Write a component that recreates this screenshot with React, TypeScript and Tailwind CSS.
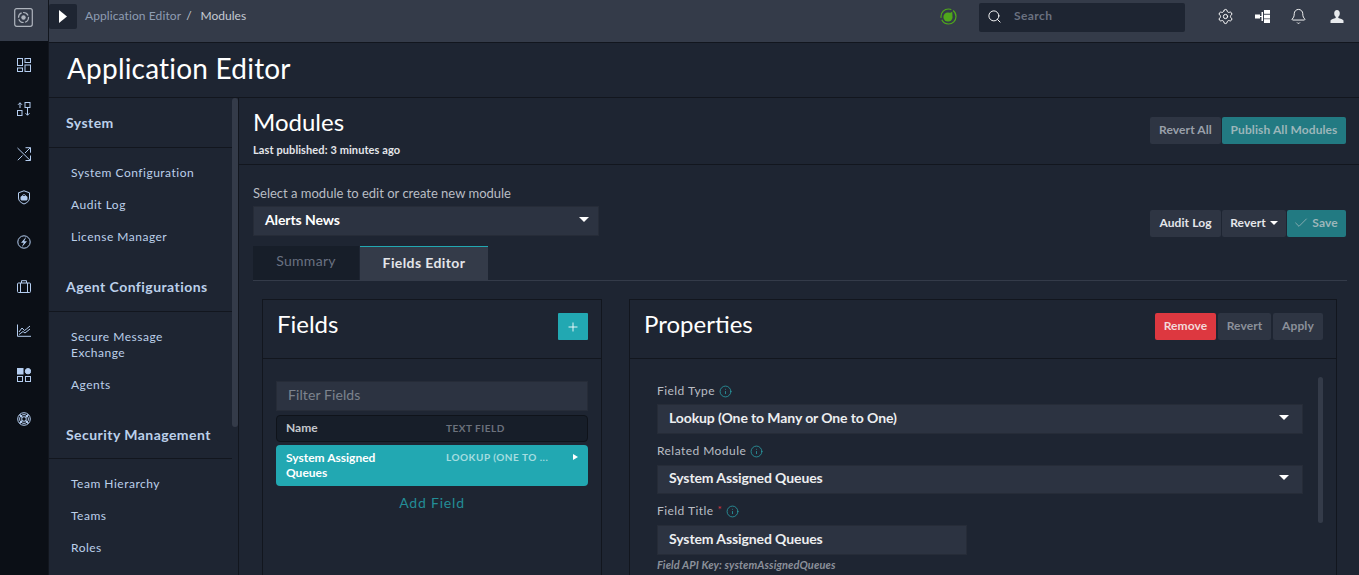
import React from 'react';
import { Settings, Bell, Search, Plus, Check, Info } from 'lucide-react';

const railStroke = '#b4cdf0';

const DashIcon = () => (
  <svg width="14" height="14" viewBox="0 0 14 14" fill="none" stroke={railStroke} strokeWidth="1">
    <rect x="0.5" y="0.5" width="5" height="7" />
    <rect x="8" y="0.5" width="5.5" height="4" />
    <rect x="0.5" y="10" width="5" height="3.5" />
    <rect x="8" y="7" width="5.5" height="6.5" />
  </svg>
);

const QueueIcon = () => (
  <svg width="14" height="14" viewBox="0 0 14 14" fill="none" stroke={railStroke} strokeWidth="1">
    <path d="M3 6V0.8M1 2.8l2-2 2 2" />
    <rect x="0.5" y="8.5" width="4.5" height="5" />
    <rect x="8" y="0.5" width="5" height="5" />
    <path d="M10.5 6v7.2M8.500 11.200l2 2 2-2" />
  </svg>
);

const ShuffleIcon = () => (
  <svg width="14" height="14" viewBox="0 0 14 14" fill="none" stroke={railStroke} strokeWidth="1">
    <path d="M0.500 1l12.800 12.500M0.800 13.200L5.500 8.500M8 6l5.300-5.300" />
    <path d="M8.500 0.700h5v5M8.500 13.500h5v-5" />
  </svg>
);

const ShieldIcon = () => (
  <svg width="14" height="15" viewBox="0 0 14 15" fill="none" stroke={railStroke} strokeWidth="1">
    <path d="M7 0.800l5.500 2v5.200c0 3-2.500 4.800-5.500 6-3-1.200-5.500-3-5.500-6V2.800z" />
    <rect x="4" y="6.500" width="6" height="3.500" rx="0.500" fill={railStroke} />
    <path d="M5.200 6.500c0-2.400 3.600-2.400 3.600 0" />
  </svg>
);

const BoltIcon = () => (
  <svg width="14" height="14" viewBox="0 0 14 14" fill="none" stroke={railStroke} strokeWidth="1">
    <circle cx="7" cy="7" r="6.200" />
    <path d="M9.500 1.500L4 7.800h2.800L4.500 12.500l5.500-6.300H7.200z" fill={railStroke} stroke="none" />
  </svg>
);

const CaseIcon = () => (
  <svg width="14" height="13" viewBox="0 0 14 13" fill="none" stroke={railStroke} strokeWidth="1">
    <rect x="0.500" y="3" width="13" height="9.500" rx="1" />
    <path d="M4.500 3V0.700h5V3M3.500 3v9.500M10.500 3v9.500" />
  </svg>
);

const ChartIcon = () => (
  <svg width="14" height="13" viewBox="0 0 14 13" fill="none" stroke={railStroke} strokeWidth="1">
    <path d="M0.500 0.500v11.800h13.500" />
    <path d="M2 8l3-4 2.500 2.500 2-1.500L13 2" />
    <path d="M2 10.500l4-3 2 1.500 5-4" />
  </svg>
);

const AppsIcon = () => (
  <svg width="14" height="14" viewBox="0 0 14 14" fill="none" stroke={railStroke} strokeWidth="1">
    <rect x="0.500" y="0.500" width="5.500" height="5.500" fill={railStroke} />
    <circle cx="11" cy="3.200" r="2.700" fill={railStroke} />
    <rect x="0.500" y="8.500" width="5" height="5" />
    <rect x="8.500" y="8.500" width="5" height="5" />
  </svg>
);

const BuoyIcon = () => (
  <svg width="14" height="14" viewBox="0 0 14 14" fill="none" stroke={railStroke} strokeWidth="1">
    <circle cx="7" cy="7" r="6.300" />
    <circle cx="7" cy="7" r="4.400" />
    <circle cx="7" cy="7" r="2.300" />
    <path d="M2.600 2.600l2.800 2.800M11.400 2.600L8.600 5.400M2.600 11.400l2.800-2.800M11.400 11.400L8.600 8.600" strokeWidth="1.400" />
  </svg>
);

const LogoIcon = () => (
  <svg width="19" height="19" viewBox="0 0 19 19" fill="none" stroke="#aeb4bd">
    <rect x="0.700" y="0.700" width="17.600" height="17.600" rx="2" strokeWidth="1.200" />
    <circle cx="9.500" cy="9.500" r="5" strokeWidth="1.200" strokeDasharray="6 1.500" />
    <circle cx="9.500" cy="9.500" r="2.200" fill="#aeb4bd" stroke="none" />
  </svg>
);

const StatusIcon = () => (
  <svg width="17" height="17" viewBox="0 0 17 17" fill="none">
    <circle cx="8.500" cy="8.500" r="7.500" stroke="#4fa81b" strokeWidth="1.200" strokeDasharray="20 2 16 2" />
    <circle cx="8" cy="9" r="4.600" fill="#4fa81b" />
    <path d="M9 5.500l3.200-1.700L12.500 7.500z" fill="#4fa81b" />
  </svg>
);

const HierarchyIcon = () => (
  <svg width="15" height="13" viewBox="0 0 15 13">
    <rect x="0" y="4.500" width="5" height="4" fill="#fff" />
    <rect x="5" y="6" width="2" height="1" fill="#fff" />
    <rect x="6.500" y="2" width="1.500" height="9" fill="#fff" />
    <rect x="9" y="0" width="6" height="3.800" fill="#fff" />
    <rect x="9" y="4.700" width="6" height="3.800" fill="#fff" />
    <rect x="9" y="9.200" width="6" height="3.800" fill="#fff" />
  </svg>
);

const UserIcon = () => (
  <svg width="14" height="13" viewBox="0 0 13 13" fill="#e8eaed">
    <path d="M6.500 0C8.300 0 9.300 1.300 9.300 3.200c0 1.600-.7 3-1.500 3.600v1.100c1.800.6 4.700 1.200 5.200 2.600V13H0v-2.500c.5-1.400 3.400-2 5.200-2.600V6.800C4.400 6.200 3.700 4.800 3.700 3.200 3.700 1.300 4.700 0 6.500 0z" />
  </svg>
);

const Caret = () => (
  <span className="w-0 h-0 border-l-[5px] border-r-[5px] border-t-[5px] border-l-transparent border-r-transparent border-t-white" />
);

const InfoDot = () => <Info className="w-[13px] h-[13px] text-[#2aa5ad] ml-[4px]" strokeWidth={1.4} />;

const railIcons = [
  <DashIcon />,
  <QueueIcon />,
  <ShuffleIcon />,
  <ShieldIcon />,
  <BoltIcon />,
  <CaseIcon />,
  <ChartIcon />,
  <AppsIcon />,
  <BuoyIcon />,
];

const sideGroups = [
  { title: 'System', h: 'h-[50px] pt-[14px]', list: 'pt-[9px] pb-[10px]', items: ['System Configuration', 'Audit Log', 'License Manager'] },
  { title: 'Agent Configurations', h: 'h-[49px] pt-[13px]', list: 'pt-[9px] pb-[11px]', items: ['Secure Message Exchange', 'Agents'] },
  { title: 'Security Management', h: 'h-[47px] pt-[12px]', list: 'pt-[9px]', items: ['Team Hierarchy', 'Teams', 'Roles'] },
];

const GrayBtn: React.FC<{ className?: string; children: React.ReactNode }> = ({ className, children }) => (
  <button className={`h-[27px] pb-[2px] bg-[#2e3543] rounded-[2px] text-[12px] tracking-[0.1px] font-bold flex items-center justify-center ${className ?? ''}`}>
    {children}
  </button>
);

export default function App() {
  return (
    <div className="w-[1359px] h-[575px] overflow-hidden flex bg-[#1e2532] text-white font-['Lato','Noto_Sans',sans-serif]">
      {/* left rail */}
      <div className="w-[49px] shrink-0 flex flex-col border-r border-[#12161e] bg-[#0b0f16] pr-[1px]">
        <div className="h-[41px] shrink-0 -mr-[1px] bg-[#343b49] flex justify-center pt-[8px] pr-[1px]">
          <LogoIcon />
        </div>
        <div className="pt-[2px]">
          {railIcons.map((icon, i) => (
            <div key={i} className="h-[44.25px] flex items-center justify-center">
              {icon}
            </div>
          ))}
        </div>
      </div>

      <div className="flex-1 min-w-0 flex flex-col">
        {/* top bar */}
        <div className="h-[43px] shrink-0 bg-[#343b49] border-b border-[#12161e] flex items-start">
          <div className="w-[28px] h-[25px] mt-[4px] bg-[#1e2532] rounded-[2px] flex items-center justify-center">
            <svg width="8" height="13" viewBox="0 0 8 13" fill="#fff"><path d="M0 0l8 6.500L0 13z" /></svg>
          </div>
          <div className="ml-[8px] mt-[7px] text-[12px] tracking-[0.1px] text-[#8f9db3]">Application Editor</div>
          <div className="ml-[5px] mt-[7px] text-[12px] text-[#c5cad2]">/</div>
          <div className="ml-[9px] mt-[7px] text-[12px] text-[#c5cad2]">Modules</div>
          <div className="ml-auto h-[35px] flex items-center">
            <div className="pb-[3px] flex"><StatusIcon /></div>
            <div className="ml-[22px] w-[206px] h-[29px] bg-[#1e2532] rounded-[2px] flex items-center pl-[8px] pb-[3px]">
              <Search className="w-[15px] h-[15px] text-white" strokeWidth={1.5} />
              <span className="ml-[12px] text-[12px] tracking-[0.4px] text-[#6a7180] font-bold">Search</span>
            </div>
            <div className="ml-[32px] pb-[3px] flex"><Settings className="w-[17px] h-[17px] text-white" strokeWidth={1.4} /></div>
            <div className="ml-[21px] pb-[3px] flex"><HierarchyIcon /></div>
            <div className="ml-[20px] pb-[3px] flex"><Bell className="w-[17px] h-[17px] text-white" strokeWidth={1.3} /></div>
            <div className="ml-[23px] mr-[15px] pb-[3px] flex"><UserIcon /></div>
          </div>
        </div>

        {/* page title */}
        <div className="h-[55px] shrink-0 border-b border-[#12161e] pl-[18px] pb-[4px] flex items-center">
          <h1 className="text-[28px] leading-none tracking-[0.2px] font-normal">Application Editor</h1>
        </div>

        <div className="flex-1 min-h-0 flex">
          {/* sidebar */}
          <div className="w-[183px] shrink-0 overflow-hidden">
            {sideGroups.map((g) => (
              <div key={g.title}>
                <div className={`${g.h} pl-[17px] border-b border-[#12161e] text-[14px] font-bold tracking-[0.45px] text-[#bcd0ea] leading-[22px]`}>
                  {g.title}
                </div>
                <div className={g.list}>
                  {g.items.map((item) => (
                    <div key={item} className="pl-[22px] pr-[30px] py-[8px] text-[12px] leading-[16px] tracking-[0.5px] text-[#bcd0ea]">
                      {item}
                    </div>
                  ))}
                </div>
              </div>
            ))}
          </div>
          <div className="w-[7px] shrink-0 border-r border-[#12161e]">
            <div className="w-[6px] h-[329px] bg-[#343b49] rounded-[3px]" />
          </div>

          {/* main */}
          <div className="flex-1 min-w-0 overflow-hidden">
            <div className="h-[67px] border-b border-[#12161e] pl-[14px] pr-[13px] flex justify-between">
              <div>
                <div className="text-[24px] leading-[30px] mt-[9px] font-normal">Modules</div>
                <div className="text-[11px] leading-[14px] mt-[6px] tracking-[0.1px] font-bold text-[#e4e6ea]">Last published: 3 minutes ago</div>
              </div>
              <div className="flex mt-[19px] gap-[1px]">
                <GrayBtn className="w-[71px] text-[#9aa0aa]">Revert All</GrayBtn>
                <GrayBtn className="w-[124px] !bg-[#227a82] text-[#9cb6ba]">Publish All Modules</GrayBtn>
              </div>
            </div>

            <div className="pl-[14px] pr-[13px] flex justify-between">
              <div>
                <div className="text-[13px] leading-[16px] mt-[20px] text-[#b9bdc4]">Select a module to edit or create new module</div>
                <div className="w-[346px] h-[30px] mt-[5px] pb-[4px] bg-[#2c3341] border border-[#262c38] flex items-center justify-between pl-[11px] pr-[9px] text-[14px] tracking-[-0.1px] font-bold">
                  Alerts News
                  <Caret />
                </div>
              </div>
              <div className="flex mt-[45px] gap-[1px]">
                <GrayBtn className="w-[71px] text-[#e4e6ea]">Audit Log</GrayBtn>
                <GrayBtn className="w-[64px] text-[#e4e6ea]">
                  Revert
                  <span className="ml-[4px] w-0 h-0 border-l-[4px] border-r-[4px] border-t-[4px] border-l-transparent border-r-transparent border-t-white" />
                </GrayBtn>
                <GrayBtn className="w-[59px] pr-[2px] !bg-[#227a82] text-[#9cb6ba]">
                  <Check className="w-[16px] h-[16px] mr-[3px]" strokeWidth={1.2} />
                  Save
                </GrayBtn>
              </div>
            </div>

            {/* tabs */}
            <div className="ml-[14px] mr-[12px] mt-[9px] h-[35px] border-b border-[#343b49] flex">
              <div className="w-[106px] h-[34px] pb-[6px] bg-[#171e29] text-[14px] tracking-[0.3px] text-[#697181] flex items-center justify-center">Summary</div>
              <div className="ml-[1px] w-[128px] h-[34px] pb-[2px] bg-[#343b49] border-t border-[#22a8b2] text-[14px] tracking-[0.4px] font-bold text-[#e4e6ea] flex items-center justify-center">Fields Editor</div>
            </div>

            {/* panels */}
            <div className="mt-[18px] ml-[23px] flex gap-[27px]">
              <div className="w-[340px] h-[300px] shrink-0 border border-[#12161e]">
                <div className="h-[59px] border-b border-[#12161e] pl-[14px] pr-[13px] flex justify-between">
                  <div className="text-[24px] leading-[30px] mt-[9px]">Fields</div>
                  <div className="mt-[13px] w-[30px] h-[27px] bg-[#22a8b2] rounded-[1px] flex items-center justify-center">
                    <Plus className="w-[14px] h-[14px] text-white" strokeWidth={1.5} />
                  </div>
                </div>
                <div className="px-[13px] pt-[22px]">
                  <div className="h-[30px] pb-[3px] bg-[#2c3341] border border-[#262c38] pl-[11px] text-[14px] tracking-[0.1px] text-[#7d838e] flex items-center">Filter Fields</div>
                  <div className="mt-[4px] h-[27px] bg-[#171e29] border border-[#0f131a] rounded-[4px] flex items-center pl-[9px]">
                    <span className="w-[160px] text-[12px] font-bold text-[#c4c7cc] -mt-[2px]">Name</span>
                    <span className="text-[10px] font-bold tracking-[0.5px] text-[#6c727d]">TEXT FIELD</span>
                  </div>
                  <div className="mt-[3px] h-[41px] bg-[#22a8b2] rounded-[4px] flex pl-[10px] pt-[5px]">
                    <span className="w-[160px] pr-[30px] text-[12px] leading-[15px] font-bold text-white">System Assigned Queues</span>
                    <span className="w-[127px] text-[10px] leading-[15px] font-bold tracking-[0.5px] text-[#a5dde0]">LOOKUP (ONE TO ...</span>
                    <span className="mt-[4px] w-0 h-0 border-t-[3.5px] border-b-[3.5px] border-l-[5px] border-t-transparent border-b-transparent border-l-white" />
                  </div>
                  <div className="mt-[6px] text-center text-[14px] tracking-[0.8px] text-[#238d97]">Add Field</div>
                </div>
              </div>

              <div className="w-[708px] h-[300px] shrink-0 border border-[#12161e]">
                <div className="h-[59px] border-b border-[#12161e] pl-[14px] pr-[13px] flex justify-between">
                  <div className="text-[24px] leading-[30px] mt-[9px]">Properties</div>
                  <div className="flex mt-[13px] gap-[2px]">
                    <GrayBtn className="w-[61px] !bg-[#dd3840] text-[#f3dadb]">Remove</GrayBtn>
                    <GrayBtn className="w-[53px] text-[#8b909a]">Revert</GrayBtn>
                    <GrayBtn className="w-[50px] text-[#8b909a]">Apply</GrayBtn>
                  </div>
                </div>
                <div className="flex pl-[27px] pr-[13px] pt-[18px]">
                  <div className="w-[646px] shrink-0">
                    <div className="h-[27px] flex items-center text-[12px] tracking-[0.45px] text-[#b9bdc4] pt-[1px]">Field Type<InfoDot /></div>
                    <div className="h-[30px] pb-[4px] bg-[#2c3341] border border-[#262c38] pl-[11px] pr-[13px] flex items-center justify-between text-[14px] tracking-[-0.1px] font-bold text-[#eceef0]">
                      Lookup (One to Many or One to One)
                      <Caret />
                    </div>
                    <div className="h-[31px] pt-[3px] flex items-center text-[12px] tracking-[0.45px] text-[#b9bdc4]">Related Module<InfoDot /></div>
                    <div className="h-[29px] pb-[4px] bg-[#2c3341] border border-[#262c38] pl-[11px] pr-[13px] flex items-center justify-between text-[14px] tracking-[-0.1px] font-bold text-[#eceef0]">
                      System Assigned Queues
                      <Caret />
                    </div>
                    <div className="h-[31px] pt-[3px] flex items-center text-[12px] tracking-[0.45px] text-[#b9bdc4]">
                      Field Title<span className="ml-[4px] text-[#dd3840] text-[10px] -mt-[3px]">*</span><InfoDot />
                    </div>
                    <div className="w-[310px] h-[30px] pb-[4px] bg-[#2c3341] border border-[#262c38] pl-[11px] flex items-center text-[14px] tracking-[-0.1px] font-bold text-[#eceef0]">
                      System Assigned Queues
                    </div>
                    <div className="mt-[3px] text-[11px] leading-[14px] tracking-[0.1px] italic font-bold text-[#8b909a]">Field API Key: systemAssignedQueues</div>
                  </div>
                  <div className="ml-[15px] w-[5px] h-[146px] bg-[#343b49] rounded-[3px]" />
                </div>
              </div>
            </div>
          </div>
        </div>
      </div>
    </div>
  );
}
